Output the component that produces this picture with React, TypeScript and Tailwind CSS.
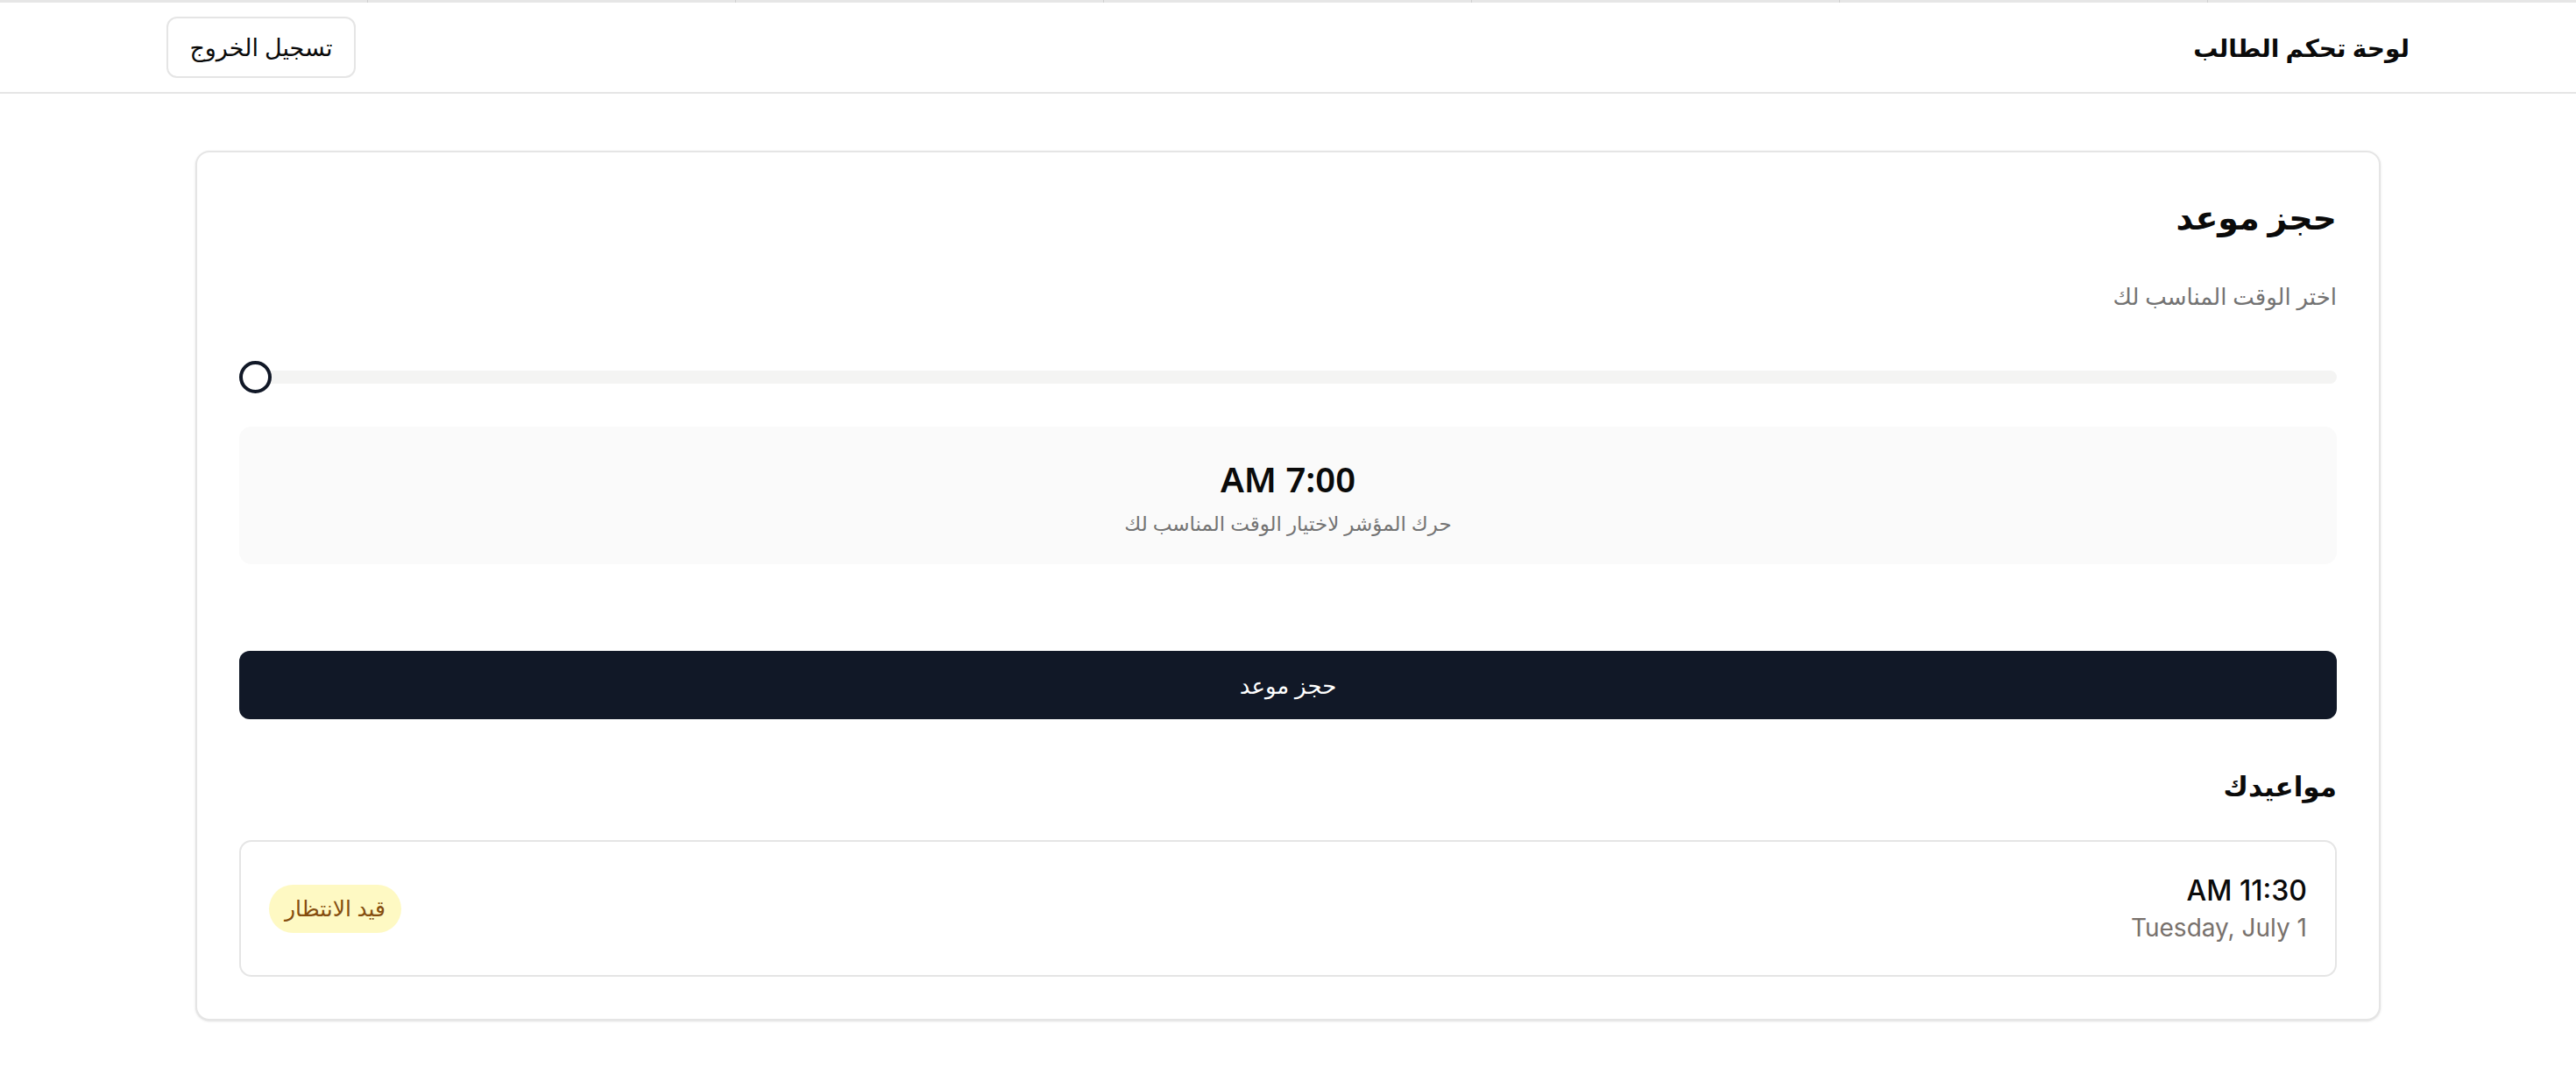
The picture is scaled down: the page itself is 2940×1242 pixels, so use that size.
const segments = [0, 1, 2, 3, 4, 5, 6];

const StatusBadge = ({ label }: { label: string }) => (
  <span className="inline-flex h-[55px] items-center rounded-full bg-[#fef9c3] px-[18px] text-[25px] text-[#854d0e]">
    {label}
  </span>
);

const TimeSlider = () => (
  <div className="relative flex h-[37px] items-center" dir="ltr">
    <div className="h-[15px] w-full rounded-full bg-[#f4f4f3]" />
    <div className="absolute left-0 top-0 h-[37px] w-[37px] rounded-full border-[4px] border-[#111827] bg-white" />
  </div>
);

export default function App() {
  return (
    <div
      dir="rtl"
      className="min-h-screen bg-white text-[#0a0a0a]"
      style={{ fontFamily: '"Noto Sans", "DejaVu Sans", sans-serif' }}
    >
      <div className="grid h-[3px] grid-cols-7 bg-[#e6e6e6]" dir="ltr">
        {segments.map((s) => (
          <div key={s} className={s < 6 ? "border-r border-[#cfcfcf]" : ""} />
        ))}
      </div>

      <header className="border-b-2 border-[#e5e5e5]">
        <div className="mx-auto flex h-[102px] w-[2560px] items-center justify-between">
          <h1 className="text-[28px] font-semibold">لوحة تحكم الطالب</h1>
          <button className="h-[70px] w-[216px] rounded-[12px] border-2 border-[#e5e5e5] bg-white text-[27px] font-medium">
            تسجيل الخروج
          </button>
        </div>
      </header>

      <main className="mx-auto mt-[65px] w-[2494px] pb-[80px]">
        <section className="rounded-[16px] border-2 border-[#e5e5e5] bg-white p-[48px] shadow-sm">
          <h2 className="text-[38px] font-bold leading-[50px]">حجز موعد</h2>
          <p className="mt-[48px] text-[26px] leading-[36px] text-[#737373]">اختر الوقت المناسب لك</p>

          <div className="mt-[56px]">
            <TimeSlider />
          </div>

          <div className="mt-[38px] rounded-[14px] bg-[#fafafa] pb-[31px] pt-[34px] text-center">
            <div className="text-[40px] font-semibold leading-[52px]" dir="ltr">
              AM 7:00
            </div>
            <div className="mt-[8px] text-[23px] leading-[32px] text-[#737373]">
              حرك المؤشر لاختيار الوقت المناسب لك
            </div>
          </div>

          <button className="mt-[99px] h-[78px] w-full rounded-[12px] bg-[#111827] text-[26px] font-medium text-white">
            حجز موعد
          </button>

          <h3 className="mt-[54px] text-[31px] font-semibold leading-[44px]">مواعيدك</h3>

          <div className="mt-[40px] flex items-center justify-between rounded-[14px] border-2 border-[#e5e5e5] px-[32px] py-[36px]">
            <div className="text-right" style={{ fontFamily: "Inter, sans-serif" }}>
              <div className="text-right text-[32px] font-medium leading-[40px]" dir="ltr">
                AM 11:30
              </div>
              <div className="mt-[4px] text-[28px] leading-[36px] text-[#78716c]">Tuesday, July 1</div>
            </div>
            <StatusBadge label="قيد الانتظار" />
          </div>
        </section>
      </main>
    </div>
  );
}
